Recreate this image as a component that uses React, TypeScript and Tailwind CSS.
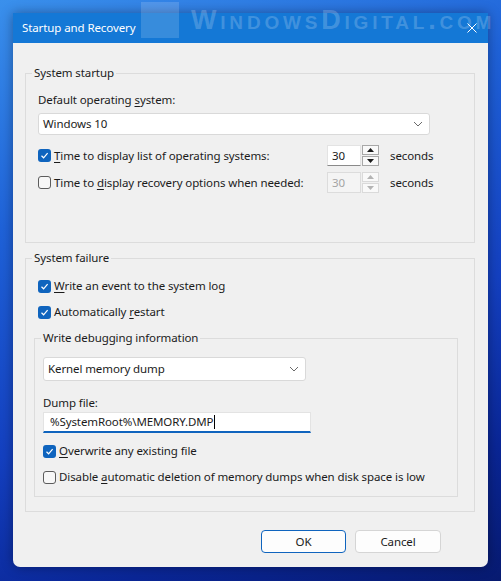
import React from 'react';

const font = { fontFamily: '"Noto Sans", "Open Sans", sans-serif' };

// access-key underline
const U = ({ children }: { children: React.ReactNode }) => <span className="underline underline-offset-2">{children}</span>;

const Check = ({ checked }: { checked?: boolean }) =>
  checked ? (
    <span className="flex h-[13px] w-[13px] shrink-0 items-center justify-center rounded-[3px] bg-[#0f64be]">
      <svg width="9" height="9" viewBox="0 0 9 9" fill="none">
        <path d="M1.5 4.8 L3.6 6.8 L7.6 2.2" stroke="white" strokeWidth="1.2" />
      </svg>
    </span>
  ) : (
    <span className="h-[13px] w-[13px] shrink-0 rounded-[3px] border border-[#5c5c5c] bg-[#f7f7f7]" />
  );

const CheckRow = ({ checked, children, className = '' }: { checked?: boolean; children: React.ReactNode; className?: string }) => (
  <div className={`flex h-[18px] items-center gap-[3px] ${className}`}>
    <Check checked={checked} />
    <span>{children}</span>
  </div>
);

const Chevron = () => (
  <svg width="10" height="6" viewBox="0 0 10 6" fill="none">
    <path d="M1 1 L5 5 L9 1" stroke="#6a6a6a" strokeWidth="1" />
  </svg>
);

const Select = ({ value, className }: { value: string; className: string }) => (
  <div className={`flex items-center justify-between rounded-[3px] border border-[#d9d9d9] bg-white pl-[4px] pr-[6px] ${className}`}>
    <span>{value}</span>
    <Chevron />
  </div>
);

const Spin = ({ disabled }: { disabled?: boolean }) => {
  const tri = disabled ? '#b4b4b4' : '#1a1a1a';
  const bd = disabled ? 'border-[#dadada]' : 'border-[#a8a8a8]';
  return (
    <div className="flex h-[21px] items-center">
      <div
        className={`flex h-[21px] w-[34px] items-center border px-[4px] ${
          disabled ? 'border-[#dcdcdc] bg-[#f4f4f4] text-[#a4a4a4]' : 'border-[#e3e3e3] border-b-[#8a8a8a] bg-white'
        }`}
      >
        30
      </div>
      <div className="ml-[1px] flex h-[21px] w-[17px] flex-col">
        <div className={`flex h-[10px] items-center justify-center border ${bd} bg-[#f9f9f9]`}>
          <svg width="7" height="4" viewBox="0 0 7 4">
            <path d="M3.5 0 L7 4 L0 4 Z" fill={tri} />
          </svg>
        </div>
        <div className={`mt-[1px] flex h-[10px] items-center justify-center border ${bd} bg-[#f9f9f9]`}>
          <svg width="7" height="4" viewBox="0 0 7 4">
            <path d="M0 0 L7 0 L3.5 4 Z" fill={tri} />
          </svg>
        </div>
      </div>
      <span className="ml-[11px]">seconds</span>
    </div>
  );
};

const Button = ({ label, primary }: { label: string; primary?: boolean }) => (
  <button
    className={`flex h-[23px] items-center justify-center rounded-[4px] border bg-[#fdfdfd] ${
      primary ? 'w-[85px] border-[#0f64be]' : 'w-[86px] border-[#d5d5d5]'
    }`}
  >
    {label}
  </button>
);

export default function App() {
  return (
    <div
      className="relative h-[581px] w-[501px] overflow-hidden bg-[linear-gradient(160deg,#3a90ec_0%,#1f62d8_30%,#1440c0_60%,#0a2696_82%,#071a70_100%)] pl-[13px] pt-[13px]"
      style={font}
    >
      <div className="w-[475px] overflow-hidden rounded-b-[7px] bg-[#f0f0f0] text-[11.5px] leading-4 tracking-[-0.1px] text-[#1b1b1b] shadow-[0_0_12px_rgba(0,0,0,0.35)]">
        {/* title bar */}
        <div className="flex h-[30px] items-center justify-between bg-[#1478d6] pl-[9px] pr-[11px] text-white">
          <span>Startup and Recovery</span>
          <svg width="10" height="10" viewBox="0 0 10 10" className="relative z-10">
            <path d="M0.5 0.5 L9.5 9.5 M9.5 0.5 L0.5 9.5" stroke="white" strokeWidth="1" />
          </svg>
        </div>

        {/* body */}
        <div className="flex flex-col pl-[12px] pr-[13px] pt-[22px]">
          <fieldset className="h-[178px] border border-[#dcdcdc] pl-[12px] pt-[11px]">
            <legend className="-ml-[6px] px-[2px] leading-4">System startup</legend>
            <div className="h-[16px]">
              Default operating <U>s</U>ystem:
            </div>
            <Select value="Windows 10" className="mt-[5px] h-[22px] w-[392px]" />
            <div className="mt-[10px] flex items-center">
              <CheckRow checked className="w-[289px]">
                <U>T</U>ime to display list of operating systems:
              </CheckRow>
              <Spin />
            </div>
            <div className="mt-[6px] flex items-center">
              <CheckRow className="w-[289px]">
                Time to <U>d</U>isplay recovery options when needed:
              </CheckRow>
              <Spin disabled />
            </div>
          </fieldset>

          <fieldset className="mt-[7px] h-[262px] border border-[#dcdcdc] pl-[12px] pr-[16px] pt-[11px]">
            <legend className="-ml-[6px] px-[2px] leading-4">System failure</legend>
            <CheckRow checked>
              <U>W</U>rite an event to the system log
            </CheckRow>
            <CheckRow checked className="mt-[8px]">
              Automatically <U>r</U>estart
            </CheckRow>
            <fieldset className="-ml-[4px] mt-[9px] h-[167px] border border-[#dcdcdc] pl-[8px] pt-[11px]">
              <legend className="-ml-[2px] px-[2px] leading-4">Write debugging information</legend>
              <Select value="Kernel memory dump" className="h-[24px] w-[263px]" />
              <div className="mt-[14px] h-[16px]">Dump file:</div>
              <div className="mt-[1px] flex h-[21px] w-[268px] items-center border border-[#e3e3e3] border-b-2 border-b-[#0f64be] bg-white pl-[6px]">
                <span>%SystemRoot%\MEMORY.DMP</span>
                <span className="ml-[1px] h-[14px] w-[1px] bg-black" />
              </div>
              <CheckRow checked className="mt-[9px]">
                <U>O</U>verwrite any existing file
              </CheckRow>
              <CheckRow className="mt-[8px]">
                Disable <U>a</U>utomatic deletion of memory dumps when disk space is low
              </CheckRow>
            </fieldset>
          </fieldset>

          <div className="mt-[18px] flex justify-end gap-[9px] pb-[14px] pr-[34px]">
            <Button label="OK" primary />
            <Button label="Cancel" />
          </div>
        </div>
      </div>

      {/* watermark, lies over the title bar and wallpaper */}
      <div className="pointer-events-none absolute left-[141px] top-[2px] flex items-center gap-[12px] text-white/20">
        <div className="h-[36px] w-[38px] bg-white/15" />
        <span
          className="text-[27px] font-bold leading-none tracking-[3.8px] [font-variant:small-caps]"
          style={{ fontFamily: '"Liberation Sans", sans-serif' }}
        >
          WindowsDigital.com
        </span>
      </div>
    </div>
  );
}
